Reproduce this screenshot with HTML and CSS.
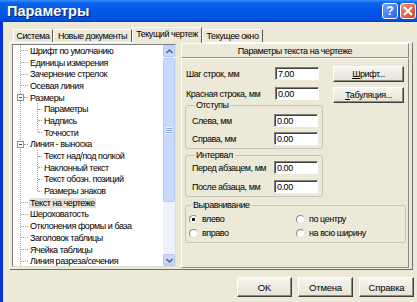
FILE: index.html
```html
<!DOCTYPE html>
<html lang="ru">
<head>
  <meta charset="UTF-8">
  <title>Параметры</title>
  <link rel="stylesheet" href="styles.css">
</head>
<body>
  <div class="window">
    <div class="titlebar">
      <span class="title">Параметры</span>
      <span class="caption-btns">
        <span class="cap help">?</span>
        <span class="cap close">
          <svg width="10" height="10" viewBox="0 0 10 10"><path d="M1 1 L9 9 M9 1 L1 9" stroke="#fff" stroke-width="2"/></svg>
        </span>
      </span>
    </div>

    <div class="client">
      <div class="tabs">
        <div class="tab t1">Система</div>
        <div class="tab t2">Новые документы</div>
        <div class="tab t3 active">Текущий чертеж</div>
        <div class="tab t4">Текущее окно</div>
      </div>

      <div class="tab-panel">
        <div class="tree">
          <ul class="tree-list">
            <li><div class="item"><span class="twig"></span>Шрифт по умолчанию</div></li>
            <li><div class="item"><span class="twig"></span>Единицы измерения</div></li>
            <li><div class="item"><span class="twig"></span>Зачернение стрелок</div></li>
            <li><div class="item"><span class="twig"></span>Осевая линия</div></li>
            <li>
              <div class="item open"><span class="box"></span><span class="twig"></span>Размеры</div>
              <ul class="children">
                <li><div class="item"><span class="twig"></span>Параметры</div></li>
                <li><div class="item"><span class="twig"></span>Надпись</div></li>
                <li><div class="item"><span class="twig"></span>Точности</div></li>
              </ul>
            </li>
            <li>
              <div class="item open"><span class="box"></span><span class="twig"></span>Линия - выноска</div>
              <ul class="children">
                <li><div class="item"><span class="twig"></span>Текст над/под полкой</div></li>
                <li><div class="item"><span class="twig"></span>Наклонный текст</div></li>
                <li><div class="item"><span class="twig"></span>Текст обозн. позиций</div></li>
                <li><div class="item"><span class="twig"></span>Размеры знаков</div></li>
              </ul>
            </li>
            <li><div class="item"><span class="twig"></span><span class="sel">Текст на чертеже</span></div></li>
            <li><div class="item"><span class="twig"></span>Шероховатость</div></li>
            <li><div class="item"><span class="twig"></span>Отклонения формы и база</div></li>
            <li><div class="item"><span class="twig"></span>Заголовок таблицы</div></li>
            <li><div class="item"><span class="twig"></span>Ячейка таблицы</div></li>
            <li><div class="item"><span class="twig"></span>Линия разреза/сечения</div></li>
          </ul>
          <div class="vscroll">
            <div class="sb-btn"><svg width="7" height="5" viewBox="0 0 7 5"><path d="M0.5 4 L3.5 1 L6.5 4" fill="none" stroke="#4d6185" stroke-width="1.5"/></svg></div>
            <div class="sb-track">
              <div class="sb-thumb"><span class="grip"></span></div>
            </div>
            <div class="sb-btn"><svg width="7" height="5" viewBox="0 0 7 5"><path d="M0.5 1 L3.5 4 L6.5 1" fill="none" stroke="#4d6185" stroke-width="1.5"/></svg></div>
          </div>
        </div>

        <div class="settings">
          <div class="settings-head">Параметры текста на чертеже</div>
          <div class="settings-body">
            <div class="top-part">
              <div class="fields">
                <div class="field"><label>Шаг строк, мм</label><input type="text" value="7.00"></div>
                <div class="field"><label>Красная строка, мм</label><input type="text" value="0.00"></div>

                <fieldset class="group indents">
                  <legend>Отступы</legend>
                  <div class="field"><label>Слева, мм</label><input type="text" value="0.00"></div>
                  <div class="field"><label>Справа, мм</label><input type="text" value="0.00"></div>
                </fieldset>

                <fieldset class="group interval">
                  <legend>Интервал</legend>
                  <div class="field"><label>Перед абзацем, мм</label><input type="text" value="0.00"></div>
                  <div class="field"><label>После абзаца, мм</label><input type="text" value="0.00"></div>
                </fieldset>
              </div>

              <div class="side-btns">
                <button class="btn font-btn"><u>Ш</u>рифт...</button>
                <button class="btn tab-btn"><u>Т</u>абуляция...</button>
              </div>
            </div>

            <fieldset class="group align">
              <legend>Выравнивание</legend>
              <div class="radios">
                <div class="radio"><span class="dot checked"></span>влево</div>
                <div class="radio"><span class="dot"></span>по центру</div>
                <div class="radio"><span class="dot"></span>вправо</div>
                <div class="radio"><span class="dot"></span>на всю ширину</div>
              </div>
            </fieldset>
          </div>
        </div>
      </div>

      <div class="dialog-btns">
        <button class="btn">OK</button>
        <button class="btn">Отмена</button>
        <button class="btn">Справка</button>
      </div>
    </div>
  </div>
</body>
</html>
```

FILE: styles.css
```css
body {
  margin: 0;
  width: 417px;
  height: 302px;
  overflow: hidden;
  font-family: "Liberation Sans", Arial, sans-serif;
  font-size: 9px;
  letter-spacing: -0.45px;
  color: #000;
  white-space: nowrap;
}
.window {
  width: 417px;
  height: 302px;
  border-left: 3px solid #0831d9;
  box-sizing: border-box;
  background: #ece9d8;
}

/* title bar */
.titlebar {
  height: 22px;
  display: flex;
  align-items: center;
  justify-content: space-between;
  background: linear-gradient(#3d8ffb 0, #0a61ea 3px, #0058e6 50%, #0052e0 85%, #0043cc 100%);
  margin-left: -3px;
  padding-left: 7px;
}
.title {
  color: white;
  font-weight: bold;
  font-size: 14.5px;
  letter-spacing: 0;
  text-shadow: 1px 1px #0a1e74;
}
.caption-btns {
  display: flex;
  gap: 2px;
  margin-right: 1px;
}
.cap {
  width: 16px;
  height: 16px;
  box-sizing: border-box;
  border: 1px solid #fff;
  border-radius: 3px;
  display: flex;
  align-items: center;
  justify-content: center;
  color: white;
  font-weight: bold;
  font-size: 12px;
  letter-spacing: 0;
}
.help {
  background: linear-gradient(135deg, #6ea4ff, #2663e6);
}
.close {
  background: linear-gradient(135deg, #f09172, #d9441c);
}

/* tabs */
.tabs {
  display: flex;
  align-items: flex-end;
  height: 15px;
  margin: 5px 0 0 10px;
  position: relative;
  z-index: 1;
}
.tab {
  height: 13px;
  line-height: 12px;
  text-align: center;
  box-sizing: border-box;
  border-top: 1px solid #fff;
  border-left: 1px solid #fff;
  border-right: 1px solid #5a5a5a;
}
.t1 { width: 40px; }
.t2 { width: 79px; }
.t3 { width: 70px; }
.t4 { width: 61px; }
.tab.active {
  height: 16px;
  line-height: 12px;
  margin-bottom: -1px;
  background: #ece9d8;
}

.tab-panel {
  display: flex;
  gap: 5px;
  margin-left: 6px;
  width: 404px;
  height: 228px;
  box-sizing: border-box;
  padding: 0 2px;
  border: 1px solid;
  border-color: #fff #6f6f6f #6f6f6f #fff;
}

/* tree */
.tree {
  display: flex;
  width: 164px;
  height: 223px;
  margin-top: 1px;
  box-sizing: border-box;
  background: white;
  border: 1px solid;
  border-color: #808080 #e0ded3 #e0ded3 #808080;
  overflow: hidden;
}
.tree-list, .children {
  list-style: none;
  margin: 0;
  padding: 0;
}
.tree-list {
  flex: 1;
  background: repeating-linear-gradient(#a0a0a0 0 1px, transparent 1px 2px) 7px 0 / 1px 100% no-repeat;
}
.children {
  background: repeating-linear-gradient(#a0a0a0 0 1px, transparent 1px 2px) 24px 0 / 1px calc(100% - 6px) no-repeat;
}
.item {
  display: flex;
  align-items: center;
  height: 11.7px;
  padding-left: 8px;
}
.twig {
  width: 7px;
  border-top: 1px dotted #a0a0a0;
  margin-right: 2px;
}
.item.open {
  padding-left: 4px;
}
.item.open .twig,
.children .twig {
  width: 4px;
}
.children .item {
  padding-left: 25px;
}
.box {
  width: 7px;
  height: 7px;
  box-sizing: border-box;
  border: 1px solid #919191;
  background: white linear-gradient(#444, #444) center / 3px 1px no-repeat;
}
.sel {
  background: #e4e2d8;
  padding: 0 1px;
  margin-left: -1px;
}

.vscroll {
  width: 12px;
  display: flex;
  flex-direction: column;
  background: #eef2fd;
}
.sb-btn {
  height: 12px;
  box-sizing: border-box;
  background: #c6d6fc;
  border: 1px solid #b4c6f6;
  border-radius: 2px;
  display: flex;
  align-items: center;
  justify-content: center;
}
.sb-track {
  flex: 1;
  padding: 1px 0 52px;
  display: flex;
}
.sb-thumb {
  flex: 1;
  background: #c9d8fc;
  border: 1px solid #b8cbf8;
  border-radius: 2px;
  display: flex;
  align-items: center;
  justify-content: center;
}
.grip {
  width: 6px;
  height: 7px;
  background: repeating-linear-gradient(#eef3ff 0 1px, #8faaea 1px 2px);
}

/* settings column */
.settings {
  width: 228px;
}
.settings-head {
  height: 15px;
  line-height: 14px;
  text-align: center;
  box-sizing: border-box;
  border: 1px solid;
  border-color: #fff #8f8d82 #8f8d82 #fff;
}
.settings-body {
  height: 210px;
  box-sizing: border-box;
  border: 1px solid;
  border-color: #fff #8f8d82 #8f8d82 #fff;
  padding: 8px 0 0 2px;
}
.top-part {
  display: flex;
}
.fields {
  width: 138px;
  margin-left: 1px;
}
.field {
  display: flex;
  justify-content: space-between;
  align-items: center;
  height: 13px;
  padding: 0 4px 0 1px;
}
.field + .field {
  margin-top: 7px;
}
input {
  width: 44px;
  height: 13px;
  box-sizing: border-box;
  padding: 0 2px;
  font: inherit;
  letter-spacing: inherit;
  border: 1px solid;
  border-color: #808080 #fff #fff #808080;
  box-shadow: inset 1px 1px #404040;
  background: white;
}

.group {
  margin: 0;
  border: 1px solid #c6c4b8;
  border-radius: 3px;
  padding: 0 4px 2px 6px;
}
legend {
  padding: 0 2px;
  margin-left: 2px;
  line-height: 12px;
  height: 12px;
}
.group .field {
  padding: 0;
}
.group .field + .field {
  margin-top: 5px;
}
.indents {
  margin-top: -1px;
  padding-top: 3px;
  padding-bottom: 3px;
}
.interval {
  padding-top: 0;
  padding-bottom: 3px;
}
.interval .field + .field {
  margin-top: 6px;
}

.side-btns {
  display: flex;
  flex-direction: column;
  gap: 5px;
  margin-left: 10px;
  margin-top: -1px;
}
.btn {
  font: inherit;
  letter-spacing: inherit;
  color: #000;
  background: linear-gradient(#f6f5f0, #e6e3d4);
  border: 1px solid;
  border-color: #fff #404040 #404040 #fff;
  box-shadow: inset -1px -1px #8f8d82;
  padding: 0;
}
.side-btns .btn {
  width: 71px;
  height: 16px;
}

.align {
  width: 221px;
  box-sizing: border-box;
  margin: 2px 0 0 1px;
  padding: 0 2px 2px 3px;
}
.radios {
  display: grid;
  grid-template-columns: 107px 1fr;
  margin-top: 1px;
}
.radio {
  display: flex;
  align-items: center;
  gap: 4px;
  height: 14px;
}
.dot {
  width: 9px;
  height: 9px;
  box-sizing: border-box;
  border-radius: 50%;
  border: 1px solid;
  border-color: #8a8a8a #e0e0e0 #e0e0e0 #8a8a8a;
  background: white;
}
.dot.checked {
  background: radial-gradient(circle, #1a1a1a 0 1.6px, white 2px);
}

.dialog-btns {
  display: flex;
  justify-content: flex-end;
  gap: 6px;
  margin-top: 7px;
  padding-right: 3px;
}
.dialog-btns .btn {
  width: 55px;
  height: 20px;
  font-size: 9.5px;
  letter-spacing: -0.2px;
}
```
